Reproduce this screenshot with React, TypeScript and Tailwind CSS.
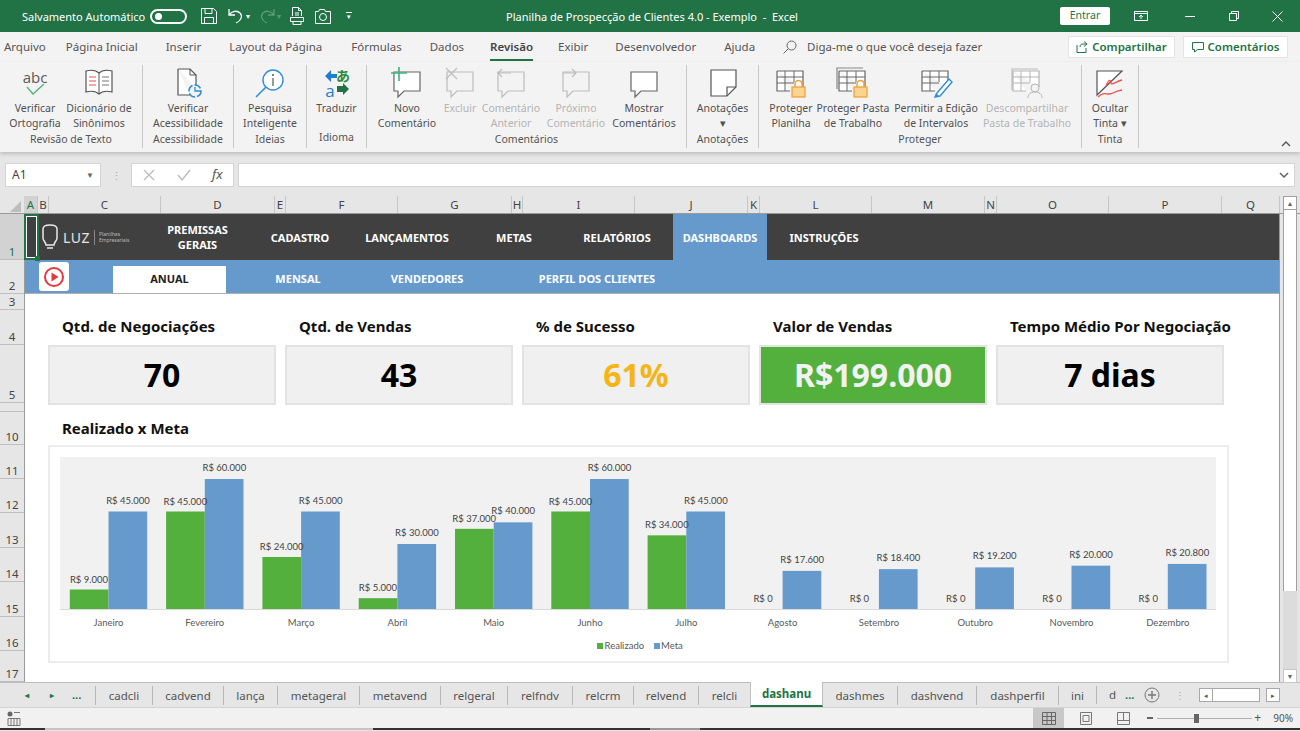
import React from "react";

const UI = "font-['Open_Sans','Noto_Sans',sans-serif]";
const CAL = "font-['Lato','Open_Sans',sans-serif]";

const BLUE = "#6699cc";
const GREEN = "#54b03c";

const Svg = ({ w = 32, h = 32, children, className = "" }: { w?: number; h?: number; children: React.ReactNode; className?: string }) => (
  <svg width={w} height={h} viewBox={`0 0 ${w} ${h}`} fill="none" className={className}>
    {children}
  </svg>
);

const Spell = () => (
  <Svg>
    <text x="16" y="16" textAnchor="middle" fontSize="15" fill="#5a5a5a" fontFamily="Open Sans">abc</text>
    <path d="M8 20l6 7L25 17" stroke="#4fb37a" strokeWidth="1.3" />
  </Svg>
);
const Book = () => (
  <Svg>
    <path d="M16 6C13 3 7 3 3 4v21c4-1 10-1 13 2 3-3 9-3 13-2V4c-4-1-10-1-13 2z" fill="#fff" stroke="#555" strokeWidth="1.2" />
    <path d="M16 6v21" stroke="#555" />
    <path d="M6 10h7M6 14h7M6 18h7" stroke="#e8534f" />
    <path d="M19 10h7M19 14h7M19 18h7" stroke="#777" />
  </Svg>
);
const Access = () => (
  <Svg>
    <path d="M6 2h12l6 6v13M6 2v26h12" stroke="#555" strokeWidth="1.2" fill="#fff" />
    <path d="M18 2v6h6" stroke="#555" />
    <circle cx="23" cy="24" r="6" fill="#f3f3f3" stroke="#2e8fd6" strokeWidth="1.6" strokeDasharray="7 2" />
    <path d="M23 20v4h6" stroke="#2e8fd6" strokeWidth="1.3" />
  </Svg>
);
const Smart = () => (
  <Svg>
    <circle cx="19" cy="13" r="10" fill="#fff" stroke="#2e8fd6" strokeWidth="1.4" />
    <path d="M12 20L2 30" stroke="#2e8fd6" strokeWidth="1.6" />
    <path d="M19 11v8" stroke="#555" strokeWidth="1.2" />
    <circle cx="19" cy="8" r="1" fill="#555" />
  </Svg>
);
const Translate = () => (
  <Svg>
    <path d="M15 6H9V2L3 8l6 6v-4h6z" fill="#1e7fd0" transform="translate(1 1)" />
    <text x="9" y="30" textAnchor="middle" fontSize="17" fill="#1e7fd0" fontFamily="Open Sans">a</text>
    <text x="22" y="14" textAnchor="middle" fontSize="14" fontWeight="700" fill="#2f8a3c" fontFamily="Noto Sans CJK JP">あ</text>
    <path d="M17 21h6v-3l6 6-6 6v-3h-6z" fill="#217346" transform="translate(-1 -2) scale(1)" />
  </Svg>
);
const Bubble = ({ tone = "#666", fill = "#fff", mark }: { tone?: string; fill?: string; mark?: "plus" | "x" | "prev" | "next" }) => (
  <Svg>
    <path d="M3 5h26v19H13l-6 6v-6H3z" fill={fill} stroke={tone} strokeWidth="1.2" />
    {mark === "plus" && <path d="M8 0v14M0 6h16" stroke="#3fb27f" strokeWidth="1.6" transform="translate(0 0)" />}
    {mark === "x" && <path d="M2 1l11 11M13 1L2 12" stroke={tone} strokeWidth="1.2" />}
    {mark === "prev" && <path d="M16 6H3m4-4L3 6l4 4" stroke={tone} strokeWidth="1.2" />}
    {mark === "next" && <path d="M3 6h13m-4-4l4 4-4 4" stroke={tone} strokeWidth="1.2" />}
  </Svg>
);
const Note = () => (
  <Svg>
    <path d="M4 3h25v17l-9 9H4z" fill="#fff" stroke="#555" strokeWidth="1.2" />
    <path d="M20 29v-9h9" stroke="#555" strokeWidth="1.2" />
  </Svg>
);
const Grid = ({ tone = "#666" }: { tone?: string }) => (
  <>
    <path d="M4 4h26v16M4 4v20h13" stroke={tone} strokeWidth="1.2" fill="#fff" />
    <path d="M4 10h26M4 16h17M12 4v20M21 4v11" stroke={tone} />
  </>
);
const Lock = () => (
  <>
    <rect x="19" y="20" width="13" height="10" fill="#fbd58e" stroke="#ee9f36" strokeWidth="1.2" />
    <path d="M22 20v-3a3.5 3.5 0 0 1 7 0v3" stroke="#ee9f36" strokeWidth="1.4" />
  </>
);
const Sheet = () => (
  <Svg w={36}>
    <Grid />
    <Lock />
  </Svg>
);
const Book2 = () => (
  <Svg w={36}>
    <path d="M2 22V1h26" stroke="#888" strokeWidth="1.2" />
    <Grid />
    <Lock />
  </Svg>
);
const Edit = () => (
  <Svg w={36}>
    <Grid />
    <path d="M19 26l12-14 3 3-12 14-5 1z" fill="#fff" stroke="#2e8fd6" strokeWidth="1.4" />
    <path d="M17 30l1-4 3 3z" fill="#2e8fd6" />
  </Svg>
);
const Share = () => (
  <Svg w={36}>
    <path d="M3 23V2h26" stroke="#bbb" strokeWidth="1.2" />
    <Grid tone="#b5b5b5" />
    <circle cx="26" cy="21" r="4" fill="#f3f3f3" stroke="#b5b5b5" />
    <path d="M19 31c0-4 3-6 7-6s7 2 7 6" stroke="#b5b5b5" />
  </Svg>
);
const Ink = () => (
  <Svg>
    <path d="M3 4h25L3 28z" fill="#fff" stroke="#555" strokeWidth="1.2" />
    <path d="M12 19c3-8 5-6 5-3s6-2 11-3" stroke="#f05050" strokeWidth="1.3" />
    <path d="M4 30c5-5 7-3 11-3s6-3 13-4" stroke="#f05050" strokeWidth="1.3" />
  </Svg>
);

type Btn = { w: number; l: [string, string?]; icon: React.ReactNode; off?: boolean };
type Group = { w: number; pl?: number; label: string; items: Btn[] };

const groups: Group[] = [
  { w: 142, pl: 4, label: "Revisão de Texto", items: [
    { w: 62, l: ["Verificar", "Ortografia"], icon: <Spell /> },
    { w: 66, l: ["Dicionário de", "Sinônimos"], icon: <Book /> },
  ] },
  { w: 90, label: "Acessibilidade", items: [{ w: 90, l: ["Verificar", "Acessibilidade"], icon: <Access /> }] },
  { w: 72, label: "Ideias", items: [{ w: 72, l: ["Pesquisa", "Inteligente"], icon: <Smart /> }] },
  { w: 59, label: "Idioma", items: [{ w: 59, l: ["Traduzir"], icon: <Translate /> }] },
  { w: 319, pl: 10, label: "Comentários", items: [
    { w: 60, l: ["Novo", "Comentário"], icon: <Bubble mark="plus" /> },
    { w: 46, l: ["Excluir"], icon: <Bubble tone="#bdbdbd" fill="#f3f3f3" mark="x" />, off: true },
    { w: 56, l: ["Comentário", "Anterior"], icon: <Bubble tone="#bdbdbd" fill="#f3f3f3" mark="prev" />, off: true },
    { w: 74, l: ["Próximo", "Comentário"], icon: <Bubble tone="#bdbdbd" fill="#f3f3f3" mark="next" />, off: true },
    { w: 62, l: ["Mostrar", "Comentários"], icon: <Bubble /> },
  ] },
  { w: 71, label: "Anotações", items: [{ w: 71, l: ["Anotações", "▾"], icon: <Note /> }] },
  { w: 322, pl: 8, label: "Proteger", items: [
    { w: 48, l: ["Proteger", "Planilha"], icon: <Sheet /> },
    { w: 76, l: ["Proteger Pasta", "de Trabalho"], icon: <Book2 /> },
    { w: 90, l: ["Permitir a Edição", "de Intervalos"], icon: <Edit /> },
    { w: 92, l: ["Descompartilhar", "Pasta de Trabalho"], icon: <Share />, off: true },
  ] },
  { w: 56, label: "Tinta", items: [{ w: 56, l: ["Ocultar", "Tinta ▾"], icon: <Ink /> }] },
];

const tabsTop: [string, number][] = [
  ["Arquivo", 4], ["Página Inicial", 20], ["Inserir", 28], ["Layout da Página", 28], ["Fórmulas", 29], ["Dados", 28],
];
const tabsTop2: [string, number][] = [["Exibir", 25], ["Desenvolvedor", 27], ["Ajuda", 28]];

const cols: [string, number][] = [
  ["A", 14], ["B", 11], ["C", 112], ["D", 114], ["E", 11], ["F", 112], ["G", 114], ["H", 11], ["I", 112], ["J", 113], ["K", 12], ["L", 112], ["M", 113], ["N", 12], ["O", 112], ["P", 113], ["Q", 58],
];
const rows: [string, number][] = [
  ["1", 46], ["2", 34], ["3", 16], ["4", 35], ["5", 58], ["", 9], ["10", 33], ["11", 34], ["12", 34], ["13", 35], ["14", 34], ["15", 35], ["16", 34], ["17", 31],
];

const nav: [string, number][] = [["CADASTRO", 132], ["LANÇAMENTOS", 82], ["METAS", 132], ["RELATÓRIOS", 74]];

const kpis: { t: string; v: string; cls: string }[] = [
  { t: "Qtd. de Negociações", v: "70", cls: "text-black bg-[#f0f0f0]" },
  { t: "Qtd. de Vendas", v: "43", cls: "text-black bg-[#f0f0f0]" },
  { t: "% de Sucesso", v: "61%", cls: "text-[#f5b417] bg-[#f0f0f0]" },
  { t: "Valor de Vendas", v: "R$199.000", cls: "text-[#f2f2f2] bg-[#54b03c]" },
  { t: "Tempo Médio Por Negociação", v: "7 dias", cls: "text-black bg-[#f0f0f0]" },
];

const months: [string, number, number][] = [
  ["Janeiro", 9000, 45000], ["Fevereiro", 45000, 60000], ["Março", 24000, 45000], ["Abril", 5000, 30000], ["Maio", 37000, 40000], ["Junho", 45000, 60000], ["Julho", 34000, 45000], ["Agosto", 0, 17600], ["Setembro", 0, 18400], ["Outubro", 0, 19200], ["Novembro", 0, 20000], ["Dezembro", 0, 20800],
];
const money = (v: number) => "R$ " + (v === 0 ? "0" : v.toLocaleString("pt-BR"));

const sheets: [string, number][] = [
  ["cadcli", 57], ["cadvend", 71], ["lança", 54], ["metageral", 82], ["metavend", 81], ["relgeral", 67], ["relfndv", 65], ["relcrm", 61], ["relvend", 65], ["relcli", 52],
];
const sheets2: [string, number][] = [["dashmes", 74], ["dashvend", 79], ["dashperfil", 82], ["ini", 38]];

function Chart() {
  const base = 609;
  const s = 130 / 60000;
  return (
    <svg width={1177} height={214} viewBox="50 447 1177 214" className="block" fontFamily="Lato, Open Sans, sans-serif">
      <rect x="60" y="457" width="1156" height="152" fill="#f1f1f1" />
      <path d="M60 609.5H1216" stroke="#d9d9d9" />
      {months.map(([m, a, b], i) => {
        const c = 108.5 + i * 96.3;
        const ha = a * s;
        const hb = b * s;
        return (
          <g key={m}>
            <rect x={c - 38.7} y={base - ha} width={38.7} height={ha} fill={GREEN} />
            <rect x={c} y={base - hb} width={38.7} height={hb} fill={BLUE} />
            <text x={c - 19.5} y={base - ha - 7} textAnchor="middle" fontSize="9.5" fill="#444">{money(a)}</text>
            <text x={c + 19.5} y={base - hb - 8} textAnchor="middle" fontSize="9.5" fill="#444">{money(b)}</text>
            <text x={c} y={626} textAnchor="middle" fontSize="9.5" fill="#595959">{m}</text>
          </g>
        );
      })}
      <rect x="597" y="643" width="6" height="6" fill={GREEN} />
      <text x="604.5" y="649" fontSize="9.5" fill="#595959">Realizado</text>
      <rect x="654" y="643" width="6" height="6" fill={BLUE} />
      <text x="661" y="649" fontSize="9.5" fill="#595959">Meta</text>
    </svg>
  );
}

export default function App() {
  return (
    <div className={`${UI} relative w-[1300px] h-[731px] overflow-hidden flex flex-col bg-[#e6e6e6] text-[#444]`}>
      {/* title bar */}
      <div className="h-[32px] shrink-0 bg-[#217346] text-white flex items-center">
        <div className="w-[506px] shrink-0 flex items-center">
          <span className="ml-[22px] text-[11px] leading-none whitespace-nowrap w-[128px]">Salvamento Automático</span>
          <span className="w-[37px] h-[15px] rounded-full border-2 border-white flex items-center pl-[3px]">
            <span className="w-[7px] h-[7px] rounded-full bg-white" />
          </span>
          <svg width="16" height="16" viewBox="0 0 16 16" fill="none" stroke="#fff" className="ml-[14px]">
            <path d="M.5.5h12l3 3v12H.5z" />
            <path d="M4 .5v5h7v-5M3.5 15.5v-6h9v6" />
          </svg>
          <svg width="16" height="16" viewBox="0 0 16 16" fill="none" stroke="#fff" strokeWidth="1.3" className="ml-[11px]">
            <path d="M1 1v6h6M1 7c3-4 8-5 11-2s1 8-4 10" />
          </svg>
          <span className="ml-[2px] text-[8px] leading-none">▾</span>
          <svg width="16" height="16" viewBox="0 0 16 16" fill="none" stroke="#5a9c7a" strokeWidth="1.3" className="ml-[9px]">
            <path d="M15 1v6H9M15 7c-3-4-8-5-11-2s-1 8 4 10" />
          </svg>
          <span className="ml-[2px] text-[8px] leading-none text-[#5a9c7a]">▾</span>
          <svg width="16" height="18" viewBox="0 0 16 18" fill="none" stroke="#fff" className="ml-[8px]">
            <path d="M3.5 9V.5h6l3 3V9M9.5.5v3h3M1.5 10.5h13v4h-13zM4 14.5v3h8v-3M6 6h4M6 8h4" />
          </svg>
          <svg width="16" height="15" viewBox="0 0 16 15" fill="none" stroke="#fff" className="ml-[10px]">
            <path d="M.5 2.5h3l1-2h5l1 2h5v12H.5z" />
            <circle cx="8" cy="8" r="3.5" />
          </svg>
          <span className="ml-[15px] flex flex-col items-center gap-[1px]">
            <span className="w-[6px] h-[1px] bg-white" />
            <span className="text-[7px] leading-[6px]">▾</span>
          </span>
        </div>
        <span className="text-[11px] whitespace-pre leading-none">Planilha de Prospecção de Clientes 4.0 - Exemplo  -  Excel</span>
        <div className="ml-auto flex items-center">
          <span className="w-[50px] h-[18px] bg-white rounded-[2px] text-[#217346] text-[10.5px] flex items-center justify-center">Entrar</span>
          <svg width="14" height="10" viewBox="0 0 14 10" fill="none" stroke="#fff" className="ml-[24px]">
            <path d="M.5.5h13v9H.5zM.5 2.5h13M7 8V4M5 6l2-2 2 2" />
          </svg>
          <span className="ml-[37px] w-[10px] h-[1px] bg-white" />
          <svg width="10" height="10" viewBox="0 0 10 10" fill="none" stroke="#fff" className="ml-[34px]">
            <path d="M.5 2.5h7v7h-7zM2.5 2.5v-2h7v7h-2" />
          </svg>
          <svg width="11" height="11" viewBox="0 0 11 11" fill="none" stroke="#fff" className="ml-[33px] mr-[17px]">
            <path d="M.5.5l10 10M10.5.5l-10 10" />
          </svg>
        </div>
      </div>

      {/* ribbon tabs */}
      <div className="h-[30px] shrink-0 bg-[#f3f3f3] flex items-center text-[11.5px] text-[#555]">
        {tabsTop.map(([t, m]) => (
          <span key={t} style={{ marginLeft: m }} className="whitespace-nowrap">{t}</span>
        ))}
        <span className="ml-[26px] relative font-semibold text-[#444] whitespace-nowrap">
          Revisão
          <span className="absolute left-0 right-0 -bottom-[5px] h-[2px] bg-[#217346]" />
        </span>
        {tabsTop2.map(([t, m]) => (
          <span key={t} style={{ marginLeft: m }} className="whitespace-nowrap">{t}</span>
        ))}
        <svg width="14" height="14" viewBox="0 0 14 14" fill="none" stroke="#666" className="ml-[28px]">
          <circle cx="8.5" cy="5.5" r="4.5" />
          <path d="M5 9l-4.500 4.500" />
        </svg>
        <span className="ml-[10px] whitespace-nowrap">Diga-me o que você deseja fazer</span>
        <div className="ml-auto flex items-center gap-[8px] mr-[12px] text-[#217346] font-semibold">
          <span className="h-[22px] w-[107px] bg-white border border-[#e4e4e4] flex items-center justify-center gap-[4px]">
            <svg width="12" height="12" viewBox="0 0 12 12" fill="none" stroke="#217346">
              <path d="M8 .5l3 2.500-3 2.500M11 3H7C5 3 4 4 4 6M1 4v7.500h9V7" />
            </svg>
            Compartilhar
          </span>
          <span className="h-[22px] w-[105px] bg-white border border-[#e4e4e4] flex items-center justify-center gap-[4px]">
            <svg width="12" height="12" viewBox="0 0 12 12" fill="none" stroke="#217346">
              <path d="M.5 1.500h11v7h-6l-3 2.500v-2.500h-2z" />
            </svg>
            Comentários
          </span>
        </div>
      </div>

      {/* ribbon */}
      <div className="relative h-[90px] shrink-0 bg-[#f3f3f3] flex shadow-[0_2px_4px_rgba(0,0,0,0.18)] z-10">
        {groups.map((g) => (
          <React.Fragment key={g.label}>
            <div style={{ width: g.w, paddingLeft: g.pl ?? 0 }} className="flex flex-col shrink-0 h-full">
              <div className="flex flex-1">
                {g.items.map((b) => (
                  <div key={b.l[0]} style={{ width: b.w }} className={`shrink-0 flex flex-col items-center pt-[4px] text-[10.5px] leading-[15px] ${b.off ? "text-[#b4b4b4]" : "text-[#505050]"}`}>
                    <div className="h-[34px] flex items-center justify-center">{b.icon}</div>
                    <span className="mt-[1px] whitespace-nowrap">{b.l[0]}</span>
                    {b.l[1] && <span className="whitespace-nowrap">{b.l[1]}</span>}
                  </div>
                ))}
              </div>
              <div style={{ marginLeft: -(g.pl ?? 0) }} className="h-[23px] text-[10.5px] text-[#555] text-center leading-[16px] whitespace-nowrap">{g.label}</div>
            </div>
            <div className="w-[1px] h-[83px] mt-[3px] bg-[#c8c8c8] shrink-0" />
          </React.Fragment>
        ))}
        <svg width="10" height="6" viewBox="0 0 10 6" fill="none" stroke="#555" strokeWidth="1.4" className="absolute right-[9px] bottom-[5px]">
          <path d="M1 5l4-4 4 4" />
        </svg>
      </div>

      {/* formula bar */}
      <div className="h-[44px] shrink-0 bg-[#e6e6e6] flex items-start pt-[11px] pl-[5px]">
        <div className="w-[96px] h-[24px] bg-white border border-[#d4d4d4] flex items-center justify-between pl-[6px] pr-[6px] text-[12px]">
          A1
          <span className="text-[8px] text-[#666]">▼</span>
        </div>
        <div className="w-[30px] h-[24px] flex items-center justify-center text-[#aaa] text-[11px] leading-none">⋮</div>
        <div className="w-[103px] h-[24px] bg-white border border-[#d4d4d4] flex items-center text-[#b5b5b5]">
          <svg width="12" height="12" viewBox="0 0 12 12" fill="none" stroke="#bbb" strokeWidth="1.3" className="ml-[11px]"><path d="M1 1l10 10M11 1L1 11" /></svg>
          <svg width="14" height="12" viewBox="0 0 14 12" fill="none" stroke="#bbb" strokeWidth="1.3" className="ml-[22px]"><path d="M1 6l4 5 8-10" /></svg>
          <span className="ml-[21px] font-['Liberation_Serif',serif] italic text-[13px] text-[#555]">fx</span>
        </div>
        <div className="ml-[4px] w-[1057px] h-[24px] bg-white border border-[#d4d4d4] flex items-center justify-end pr-[5px]">
          <svg width="10" height="6" viewBox="0 0 10 6" fill="none" stroke="#666" strokeWidth="1.5"><path d="M1 1l4 4 4-4" /></svg>
        </div>
      </div>

      {/* column headers */}
      <div className="h-[18px] shrink-0 flex bg-[#e6e6e6]">
        <div className="w-[24px] shrink-0 flex items-end justify-end pr-[3px] pb-[2px]">
          <span className="border-l-[11px] border-b-[11px] border-l-transparent border-b-[#bdbdbd]" />
        </div>
        {cols.map(([c, w], i) => (
          <div key={c} style={{ width: w }} className={`shrink-0 flex items-center justify-center text-[11.5px] leading-none border-r border-[#c6c6c6] ${i === 0 ? "bg-[#d2d2d2] text-[#217346]" : "text-[#444]"}`}>
            {c}
          </div>
        ))}
      </div>

      {/* sheet */}
      <div className="h-[469px] shrink-0 flex relative border-t border-[#9a9a9a] -mt-[1px]">
        <div className="w-[24px] shrink-0 flex flex-col bg-[#e6e6e6]">
          {rows.map(([r, h], i) => (
            <div key={i} style={{ height: h }} className={`shrink-0 flex items-end justify-center text-[11.5px] leading-[15px] border-b border-[#c0c0c0] overflow-hidden ${i === 0 ? "bg-[#d2d2d2] text-[#217346]" : "text-[#444]"}`}>
              {r}
            </div>
          ))}
        </div>
        <div className={`${CAL} w-[1256px] shrink-0 bg-white flex flex-col border-r border-[#9a9a9a] border-l border-l-[#9a9a9a]`}>
          {/* nav */}
          <div className="h-[46px] shrink-0 bg-[#404040] flex text-white font-bold text-[11px] text-center leading-[15px]">
            <div className="w-[136px] shrink-0 flex items-center pl-[15px] text-[#e4e4e4]">
              <svg width="20" height="28" viewBox="0 0 20 28" fill="none" stroke="#e8e8e8" strokeWidth="1.5">
                <path d="M3 6c0-3 2-4 7-4s7 1 7 4v9c0 3-3 4-3 7H6c0-3-3-4-3-7z" />
                <path d="M7 25h6" />
              </svg>
              <span className="ml-[3px] text-[14px] font-normal tracking-[0.5px]">LUZ</span>
              <span className="ml-[4px] w-[1px] h-[15px] bg-[#888]" />
              <span className="ml-[4px] text-[5px] leading-[6px] font-normal text-left text-[#bbb]">Planilhas<br />Empresariais</span>
            </div>
            <div className="w-[73px] shrink-0 self-center">PREMISSAS<br />GERAIS</div>
            {nav.map(([t, w]) => (
              <div key={t} style={{ width: w }} className="shrink-0 flex items-center justify-center">{t}</div>
            ))}
            <div className="ml-[19px] w-[94px] shrink-0 bg-[#6699cc] flex items-center justify-center">DASHBOARDS</div>
            <div className="w-[114px] shrink-0 flex items-center justify-center">INSTRUÇÕES</div>
          </div>
          {/* sub nav */}
          <div className="h-[34px] shrink-0 bg-[#6699cc] flex items-end text-white font-bold text-[11px] border-b border-[#b0b0b0]">
            <div className="w-[30px] h-[29px] ml-[14px] mb-[2px] shrink-0 bg-white rounded-[3px] flex items-center justify-center">
              <svg width="22" height="22" viewBox="0 0 22 22" fill="none">
                <circle cx="11" cy="11" r="9" stroke="#e5383b" strokeWidth="2" />
                <path d="M8.500 6.500l7 4.500-7 4.500z" fill="#e5383b" />
              </svg>
            </div>
            <div className="ml-[44px] w-[113px] h-[27px] shrink-0 bg-white text-[#222] flex items-center justify-center">ANUAL</div>
            <div className="w-[144px] h-[27px] shrink-0 flex items-center justify-center">MENSAL</div>
            <div className="w-[114px] h-[27px] shrink-0 flex items-center justify-center">VENDEDORES</div>
            <div className="ml-[33px] w-[160px] h-[27px] shrink-0 flex items-center justify-center whitespace-nowrap">PERFIL DOS CLIENTES</div>
          </div>
          {/* KPI */}
          <div className="mt-[16px] flex gap-[9px] pl-[23px]">
            {kpis.map((k) => (
              <div key={k.t} className="w-[228px] shrink-0 flex flex-col">
                <div className="h-[35px] pl-[14px] pb-[2px] flex items-center text-[15px] font-bold text-[#111] whitespace-nowrap">{k.t}</div>
                <div className={`h-[60px] border-2 border-[#e3e3e3] flex items-center justify-center text-[32px] font-bold leading-none ${k.cls}`}>{k.v}</div>
              </div>
            ))}
          </div>
          <div className="mt-[12px] ml-[37px] h-[22px] flex items-center text-[15px] font-bold text-[#111]">Realizado x Meta</div>
          <div className="mt-[6px] ml-[23px] w-[1181px] h-[218px] border-2 border-[#ececec] bg-white">
            <Chart />
          </div>
        </div>
        {/* scrollbar */}
        <div className="absolute left-[1283px] -top-[18px] w-[14px] h-[487px] bg-[#dcdcdc] flex flex-col">
          <div className="h-[14px] bg-white border border-[#a0a0a0] flex items-center justify-center text-[7px] text-[#666] leading-none">▲</div>
          <div className="h-[381px] bg-white border-x border-[#a0a0a0]" />
          <div className="flex-1" />
          <div className="h-[14px] bg-white border border-[#c8c8c8] flex items-center justify-center text-[7px] text-[#666] leading-none">▼</div>
        </div>
        {/* selected cell */}
        <div className="absolute left-[24px] top-0 w-[15px] h-[46px] border-2 border-[#217346] outline outline-1 outline-white -outline-offset-3">
          <span className="absolute -right-[3px] -bottom-[3px] w-[5px] h-[5px] bg-[#217346]" />
        </div>
      </div>

      {/* sheet tabs */}
      <div className="h-[25px] shrink-0 flex items-stretch bg-[#e6e6e6] border-t border-[#bdbdbd] text-[11.5px] text-[#555]">
        <div className="w-[95px] shrink-0 flex items-center text-[#217346] font-bold text-[8px]">
          <span className="ml-[25px]">◂</span>
          <span className="ml-[21px]">▸</span>
          <span className="ml-[18px] text-[11px]">...</span>
        </div>
        {sheets.map(([s, w]) => (
          <div key={s} style={{ width: w }} className="shrink-0 flex items-center justify-center">
            <span className="flex-1 text-center border-l border-[#b8b8b8] leading-[19px]">{s}</span>
          </div>
        ))}
        <div className="w-[73px] shrink-0 bg-white border-x border-[#c0c0c0] border-b-2 border-b-[#217346] -mt-[1px] flex items-center justify-center font-bold text-[#217346]">dashanu</div>
        {sheets2.map(([s, w], i) => (
          <div key={s} style={{ width: w }} className="shrink-0 flex items-center justify-center">
            <span className={`flex-1 text-center leading-[19px] ${i === 0 ? "" : "border-l border-[#b8b8b8]"}`}>{s}</span>
          </div>
        ))}
        <div className="flex items-center border-l border-[#b8b8b8] my-[3px] pl-[12px]">d</div>
        <span className="ml-[9px] self-center text-[#217346] font-bold text-[11px]">...</span>
        <svg width="16" height="16" viewBox="0 0 16 16" fill="none" stroke="#777" className="ml-[10px] self-center">
          <circle cx="8" cy="8" r="7" />
          <path d="M8 4v8M4 8h8" strokeWidth="1.4" />
        </svg>
        <span className="ml-[15px] self-center text-[#aaa] text-[10px]">⋮</span>
        <div className="ml-[14px] self-center w-[81px] h-[14px] flex items-stretch">
          <span className="w-[14px] bg-white border border-[#a8a8a8] flex items-center justify-center text-[7px] leading-none">◂</span>
          <span className="w-[47px] bg-white border-y border-r border-[#a8a8a8]" />
          <span className="w-[6px]" />
          <span className="w-[14px] bg-white border border-[#a8a8a8] flex items-center justify-center text-[7px] leading-none">▸</span>
        </div>
      </div>

      {/* status bar */}
      <div className="h-[21px] shrink-0 bg-[#f1f1f1] border-t border-[#d4d4d4] flex items-stretch">
        <svg width="14" height="15" viewBox="0 0 14 15" fill="none" stroke="#777" className="ml-[7px] self-center">
          <circle cx="3" cy="3" r="2.500" fill="#666" stroke="none" />
          <path d="M7 1.500h6M1 7.500h12v7H1zM4 7.500v7M7 7.500v7M10 7.500v7" />
        </svg>
        <div className="ml-auto flex items-stretch">
          <div className="w-[31px] bg-[#c8c8c8] flex items-center justify-center">
            <svg width="14" height="13" viewBox="0 0 14 13" fill="none" stroke="#666">
              <path d="M.5.500h13v12H.5zM.5 4.500h13M.5 8.500h13M5 .5v12M9.500.5v12" />
            </svg>
          </div>
          <div className="w-[45px] flex items-center justify-center ml-[-1px]">
            <svg width="12" height="13" viewBox="0 0 12 13" fill="none" stroke="#777">
              <path d="M.5.500h11v12H.5zM3 3.500h6v6H3z" />
            </svg>
          </div>
          <div className="w-[30px] flex items-center justify-center">
            <svg width="13" height="13" viewBox="0 0 13 13" fill="none" stroke="#777">
              <path d="M.5.500h12v12H.5zM.5 8.500h12M6.500.5v8" />
            </svg>
          </div>
          <div className="ml-[9px] w-[118px] flex items-center relative">
            <span className="w-[6px] h-[1.500px] bg-[#666]" />
            <span className="ml-[4px] w-[95px] h-[1px] bg-[#b0b0b0]" />
            <span className="absolute left-[47px] top-[6px] w-[5px] h-[9px] bg-[#666]" />
            <span className="ml-[2px] text-[#555] text-[12px] leading-none">+</span>
          </div>
          <span className="ml-[8px] mr-[7px] self-center text-[10px] text-[#555]">90%</span>
        </div>
      </div>

      {/* window edge */}
      <div className="h-[2px] shrink-0 flex bg-[#333]">
        <span className="ml-[45px] w-[328px] bg-[#c4c4c4]" />
        <span className="ml-[277px] w-[50px] bg-[#999]" />
      </div>
    </div>
  );
}
